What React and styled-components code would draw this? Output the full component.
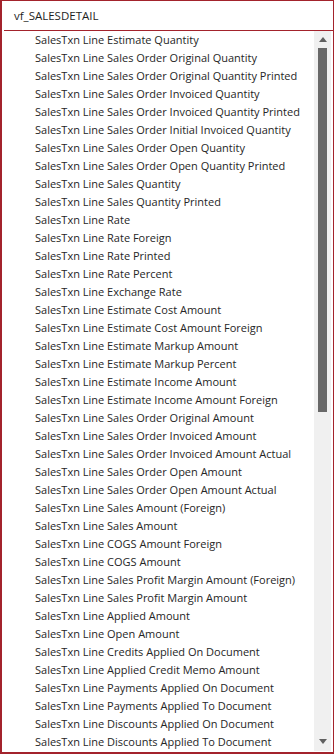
import React from "react";
import styled, { createGlobalStyle } from "styled-components";

const GlobalStyle = createGlobalStyle`
  html, body {
    margin: 0;
    padding: 0;
    background: #ffffff;
  }
  body {
    font-family: "Open Sans", "Noto Sans", "Liberation Sans", sans-serif;
  }
`;

const fields = [
  "Estimate Quantity",
  "Sales Order Original Quantity",
  "Sales Order Original Quantity Printed",
  "Sales Order Invoiced Quantity",
  "Sales Order Invoiced Quantity Printed",
  "Sales Order Initial Invoiced Quantity",
  "Sales Order Open Quantity",
  "Sales Order Open Quantity Printed",
  "Sales Quantity",
  "Sales Quantity Printed",
  "Rate",
  "Rate Foreign",
  "Rate Printed",
  "Rate Percent",
  "Exchange Rate",
  "Estimate Cost Amount",
  "Estimate Cost Amount Foreign",
  "Estimate Markup Amount",
  "Estimate Markup Percent",
  "Estimate Income Amount",
  "Estimate Income Amount Foreign",
  "Sales Order Original Amount",
  "Sales Order Invoiced Amount",
  "Sales Order Invoiced Amount Actual",
  "Sales Order Open Amount",
  "Sales Order Open Amount Actual",
  "Sales Amount (Foreign)",
  "Sales Amount",
  "COGS Amount Foreign",
  "COGS Amount",
  "Sales Profit Margin Amount (Foreign)",
  "Sales Profit Margin Amount",
  "Applied Amount",
  "Open Amount",
  "Credits Applied On Document",
  "Applied Credit Memo Amount",
  "Payments Applied On Document",
  "Payments Applied To Document",
  "Discounts Applied On Document",
  "Discounts Applied To Document",
];

const Frame = styled.div`
  box-sizing: border-box;
  width: 334px;
  height: 754px;
  border: 1px solid #a3232c;
  border-left-width: 2px;
  border-bottom-width: 2px;
  display: flex;
  flex-direction: column;
  overflow: hidden;
`;

const Header = styled.div`
  height: 29px;
  display: flex;
  align-items: center;
  padding-left: 12px;
  font-size: 11.5px;
  color: #1e1e1e;
`;

const Body = styled.div`
  flex: 1;
  margin-left: 2px;
  border-top: 1px solid #a3232c;
  display: flex;
  min-height: 0;
`;

const List = styled.ul`
  flex: 1;
  list-style: none;
  margin: 0;
  padding: 0 0 0 31px;
  overflow: hidden;
`;

const Item = styled.li`
  height: 18px;
  line-height: 18px;
  font-size: 11px;
  color: #262626;
  white-space: nowrap;
`;

const ScrollBar = styled.div`
  width: 17px;
  margin-right: 2px;
  margin-bottom: 1px;
  background: #f0f0f0;
  display: flex;
  flex-direction: column;
  align-items: center;
`;

const Arrow = styled.div`
  width: 0;
  height: 0;
  border-left: 4px solid transparent;
  border-right: 4px solid transparent;
  ${(p) =>
    p.$down
      ? "border-top: 5px solid #606060; margin-top: auto; margin-bottom: 7px;"
      : "border-bottom: 5px solid #606060; margin-top: 6px;"}
`;

const Thumb = styled.div`
  width: 9px;
  height: 364px;
  margin-top: 6px;
  background: #686868;
`;

const App = () => {
  return (
    <>
      <GlobalStyle />
      <Frame>
        <Header>vf_SALESDETAIL</Header>
        <Body>
          <List>
            {fields.map((name) => (
              <Item key={name}>SalesTxn Line {name}</Item>
            ))}
          </List>
          <ScrollBar>
            <Arrow />
            <Thumb />
            <Arrow $down />
          </ScrollBar>
        </Body>
      </Frame>
    </>
  );
};

export default App;
